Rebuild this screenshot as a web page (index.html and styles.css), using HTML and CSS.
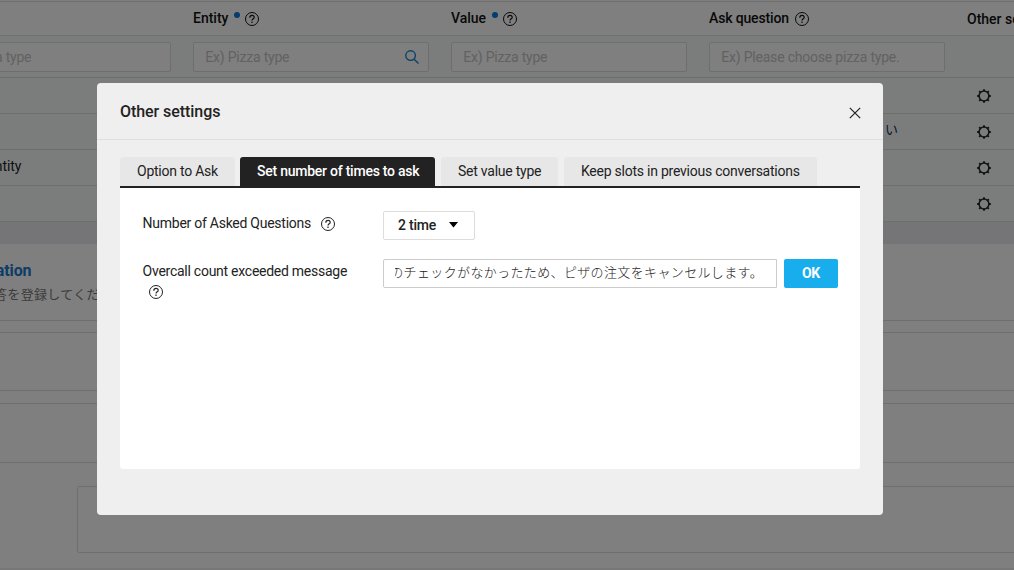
FILE: index.html
```html
<!DOCTYPE html>
<html lang="en">
<head>
<meta charset="utf-8">
<title>Other settings</title>
<link rel="stylesheet" href="styles.css">
</head>
<body>
<svg width="0" height="0" class="defs">
  <symbol id="help" viewBox="0 0 14 14"><g fill="none" stroke="currentColor" stroke-width="1"><circle cx="7" cy="7" r="6.5"/><path d="M4.8 5.7C4.8 4.2 5.7 3.4 7 3.4S9.2 4.2 9.2 5.4C9.2 6.8 7 6.9 7 8.6" stroke-width="1.15"/><path d="M7 9.6v1.4" stroke-width="1.2"/></g></symbol>
  <symbol id="gear" viewBox="0 0 14 14"><circle cx="7" cy="7" r="4.9" fill="none" stroke="currentColor" stroke-width="1.5"/><path d="M7 .2v2M7 11.8v2M.2 7h2M11.8 7h2M2.2 2.2l1.4 1.4M10.4 10.4l1.4 1.4M11.8 2.2l-1.4 1.4M3.6 10.4l-1.4 1.4" stroke="currentColor" stroke-width="1.8"/></symbol>
</svg>
<div class="page">
  <div class="table">
    <div class="row head">
      <div class="cell"></div>
      <div class="cell"><span>Entity</span><i class="dot"></i><svg class="help"><use href="#help"/></svg></div>
      <div class="cell"><span>Value</span><i class="dot"></i><svg class="help"><use href="#help"/></svg></div>
      <div class="cell"><span class="ask-title">Ask question</span><svg class="help ask"><use href="#help"/></svg></div>
      <div class="cell other">Other settings</div>
    </div>
    <div class="row filter">
      <div class="cell"><div class="field">Ex) Pizza type</div></div>
      <div class="cell"><div class="field">Ex) Pizza type<svg class="search" viewBox="0 0 14 14"><g fill="none" stroke="currentColor" stroke-width="1.4"><circle cx="5.6" cy="5.6" r="4.8"/><path d="M9.2 9.2l4.3 4.3"/></g></svg></div></div>
      <div class="cell"><div class="field">Ex) Pizza type</div></div>
      <div class="cell"><div class="field">Ex) Please choose pizza type.</div></div>
      <div class="cell"></div>
    </div>
    <div class="row item"><div class="cell gear-cell"><svg class="gear"><use href="#gear"/></svg></div></div>
    <div class="row item"><div class="cell ask-cell">い</div><div class="cell gear-cell"><svg class="gear"><use href="#gear"/></svg></div></div>
    <div class="row item"><div class="cell name-cell">Entity</div><div class="cell gear-cell"><svg class="gear"><use href="#gear"/></svg></div></div>
    <div class="row item"><div class="cell gear-cell"><svg class="gear"><use href="#gear"/></svg></div></div>
  </div>
  <div class="band"></div>
  <section class="section-head">
    <div class="section-title">Confirmation</div>
    <div class="section-note">答を登録してください</div>
  </section>
  <div class="strip first"></div>
  <div class="strip second"></div>
  <div class="box"></div>
  <div class="page-end"></div>
</div>
<div class="overlay">
  <div class="modal">
    <header class="modal-head">
      <h1>Other settings</h1>
      <svg class="close" viewBox="0 0 12 12"><path d="M.8.8l10.4 10.4M11.2.8L.8 11.2" stroke="currentColor" stroke-width="1.2"/></svg>
    </header>
    <div class="modal-body">
      <nav class="tabs">
        <div class="tab t1"><span>Option to Ask</span></div>
        <div class="tab t2 active"><span>Set number of times to ask</span></div>
        <div class="tab t3"><span>Set value type</span></div>
        <div class="tab t4"><span>Keep slots in previous conversations</span></div>
      </nav>
      <div class="panel">
        <div class="form-row">
          <div class="label"><span>Number of Asked Questions</span><svg class="help"><use href="#help"/></svg></div>
          <div class="select"><span>2 time</span><svg class="caret" viewBox="0 0 9 6"><path d="M0 0h9L4.5 5.5z"/></svg></div>
        </div>
        <div class="form-row">
          <div class="label stack"><span>Overcall count exceeded message</span><svg class="help"><use href="#help"/></svg></div>
          <div class="message"><div class="message-text"><span>のチェックがなかったため、ピザの注文をキャンセルします。</span></div></div>
          <div class="ok">OK</div>
        </div>
      </div>
    </div>
  </div>
</div>
</body>
</html>
```
FILE: styles.css
```css
* { box-sizing: border-box; }
body { margin: 0; width: 1014px; height: 570px; overflow: hidden; font: 14px/20px Roboto, "Noto Sans CJK JP", sans-serif; color: #222; }
.defs { position: absolute; }
.page { height: 570px; overflow: hidden; background: #fff; display: flex; flex-direction: column; }
.table { margin-left: -76px; width: 1100px; border-top: 1px solid #dcdcdc; margin-top: 1px; flex: none; }
.row { display: grid; grid-template-columns: repeat(4, 258px) 68px; border-bottom: 1px solid #dcdfde; background: #f6fbf9; }
.cell { padding: 0 11px; display: flex; align-items: center; white-space: nowrap; }
.head { height: 34px; background: #fff; font-weight: 500; color: #111; }
.head .cell { padding-bottom: 1px; }
.head .other { padding-bottom: 0; padding-top: 1px; }
.dot { width: 6px; height: 6px; border-radius: 50%; background: #0d78dc; margin: 0 4.4px 7px 6px; }
.help { width: 14px; height: 14px; flex: none; }
.head .help { margin-top: 2px; }
.ask-title { letter-spacing: -.15px; }
.head .ask { margin-left: 6px; }
.filter { height: 42px; }
.field { width: 236px; height: 30px; border: 1px solid #dcdcdc; border-radius: 2px; background: #fff; color: #c4c4c4; letter-spacing: -.2px; padding: 0 9px 0 11.2px; display: flex; align-items: center; justify-content: space-between; }
.search { width: 14px; height: 14px; color: #1487cf; }
.item { height: 36px; }
.gear-cell { grid-column: 5; padding-left: 21px; color: #222; grid-row: 1; }
.gear { width: 14px; height: 14px; }
.ask-cell { grid-column: 4; padding-left: 187px; color: #1c2c58; font-size: 13px; padding-bottom: 3px; }
.name-cell { grid-column: 1; grid-row: 1; padding: 0 0 3px 63px; letter-spacing: -.1px; }
.band { height: 22px; background: #ebebee; flex: none; }
.section-head { height: 77px; border-bottom: 1px solid #dcdcdc; padding-top: 17px; flex: none; }
.section-title { width: 31.5px; display: flex; justify-content: flex-end; font-size: 16px; font-weight: 700; letter-spacing: -.1px; color: #1878ce; }
.section-note { margin: 4px 0 0 -6px; font-size: 13px; letter-spacing: .33px; color: #777; white-space: nowrap; }
.strip { border: solid #dcdcdc; border-width: 1px 0; flex: none; }
.first { height: 59px; margin-top: 11px; }
.second { height: 60px; margin-top: 12px; }
.box { height: 67px; margin: 23px -10px 0 77px; border: 1px solid #dcdcdc; border-radius: 2px; flex: none; }
.page-end { margin-top: 15px; height: 2px; background: #f0eef0; flex: none; }
.overlay { position: absolute; inset: 0; background: rgba(0,0,0,.5); padding: 83px 0 0 97px; }
.modal { width: 786px; height: 432px; background: #efefef; border-radius: 4px; }
.modal-head { height: 57px; border-bottom: 1px solid #dfdfdf; padding: 0 22px 0 23px; display: flex; align-items: center; justify-content: space-between; }
h1 { margin: 2px 0 0; font-size: 16px; font-weight: 500; letter-spacing: -.06px; }
.close { width: 12px; height: 12px; margin-top: 3px; }
.modal-body { padding: 17px 23px 0; }
.tabs { display: flex; border-bottom: 2px solid #222; height: 31px; }
.tab { height: 29px; background: #e7e7e7; border-radius: 3px 3px 0 0; padding: 4px 0 0 17px; white-space: nowrap; letter-spacing: -.24px; }
.active { background: #222; color: #fff; font-weight: 500; }
.t1 { width: 115px; margin-right: 5px; }
.t2 { width: 195px; margin-right: 6px; }
.t3 { width: 117px; margin-right: 6px; }
.t4 { width: 253px; }
.panel { height: 281px; background: #fff; border-radius: 0 0 3px 3px; padding: 23px 22px; display: flex; flex-direction: column; gap: 19px; }
.form-row { display: flex; height: 29px; }
.label { width: 241px; padding: 2px 0 0 .6px; display: flex; align-items: flex-start; gap: 10px; white-space: nowrap; letter-spacing: -.26px; }
.label .help { margin: 4px 0 0 -.1px; }
.stack { flex-direction: column; gap: 0; }
.stack .help { margin: 4px 0 0 6.4px; }
.select { width: 92px; border: 1px solid #dcdcdc; border-radius: 2px; display: flex; align-items: center; padding: 0 16px 2px 14px; justify-content: space-between; font-weight: 500; white-space: nowrap; letter-spacing: -.2px; }
.caret { width: 9px; height: 6px; }
.message { width: 394px; border: 1px solid #ccc; border-radius: 2px 0 0 2px; padding: 0 11px 2px; display: flex; align-items: center; }
.message-text { width: 370px; overflow: hidden; display: flex; justify-content: flex-end; white-space: nowrap; font-size: 13px; letter-spacing: .36px; font-weight: 300; padding-right: 2px; }
.ok { width: 54px; margin-left: 7px; background: #18adec; border-radius: 2px; color: #fff; font-weight: 700; display: flex; align-items: center; justify-content: center; padding-bottom: 1px; letter-spacing: -.2px; }
```
